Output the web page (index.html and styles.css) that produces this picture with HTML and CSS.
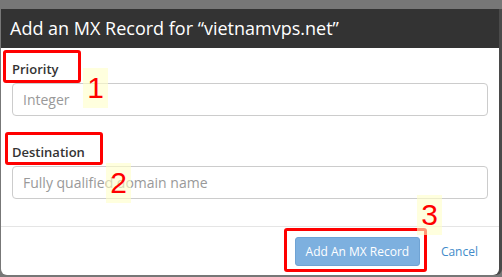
FILE: index.html
```html
<!DOCTYPE html>
<html lang="en">

<head>
  <meta charset="UTF-8">
  <title>Add an MX Record</title>
  <meta name="viewport" content="width=device-width, initial-scale=1">
  <link rel="stylesheet" href="styles.css">
</head>

<body>
  <div class="modal">
    <div class="modal-header">Add an MX Record for “vietnamvps.net”</div>
    <form class="modal-body">
      <div class="field">
        <label for="priority">Priority</label>
        <input type="text" id="priority" placeholder="Integer">
      </div>
      <div class="field">
        <label for="destination">Destination</label>
        <input type="text" id="destination" placeholder="Fully qualified domain name">
      </div>
    </form>
    <div class="modal-footer">
      <button type="button" class="btn-primary">Add An MX Record</button>
      <a href="#" class="cancel">Cancel</a>
    </div>
  </div>

  <!-- annotations drawn over the screenshot -->
  <div class="mark box-1"></div>
  <div class="mark box-2"></div>
  <div class="mark box-3"></div>
  <div class="step step-1">1</div>
  <div class="step step-2">2</div>
  <div class="step step-3">3</div>
</body>

</html>
```

FILE: styles.css
```css
body {
  font-family: "Open Sans", Arial, sans-serif;
  background: #777;
  margin: 0;
  height: 277px;
  overflow: hidden;
  position: relative;
}

.modal {
  width: 498px;
  margin: 9px 0 0 1px;
  background: #fff;
  border-radius: 0 0 6px 6px;
  box-shadow: 3px 0 0 #4a4a4a;
}

.modal-header {
  background: #333;
  color: #fff;
  height: 39px;
  line-height: 39px;
  padding: 0 9px;
  font-size: 18px;
}

.modal-body {
  padding: 11px 11px 27px 11px;
  margin: 0;
}

.field + .field {
  margin-top: 26px;
}

.field label {
  display: block;
  height: 20px;
  line-height: 20px;
  margin-bottom: 4px;
  font-size: 13px;
  font-weight: 600;
  color: #333;
}

.field input {
  display: block;
  box-sizing: border-box;
  width: 100%;
  height: 33px;
  padding: 0 10px;
  border: 1px solid #ccc;
  border-radius: 4px;
  font-family: inherit;
  font-size: 14px;
  color: #555;
}

.field input::placeholder {
  color: #999;
}

.modal-footer {
  border-top: 1px solid #e5e5e5;
  padding: 10px 21px 9px 0;
  display: flex;
  justify-content: flex-end;
  align-items: center;
  gap: 21px;
}

.btn-primary {
  width: 125px;
  height: 29px;
  border: 1px solid #6fa3d4;
  border-radius: 3px;
  background: #7db0df;
  color: #fff;
  font-family: inherit;
  font-size: 12px;
  padding: 0;
}

.cancel {
  color: #428bca;
  font-size: 12px;
  text-decoration: none;
}

.mark {
  position: absolute;
  box-sizing: border-box;
  border: 3px solid #f00;
  border-radius: 3px;
}

.box-1 {
  left: 3px;
  top: 50px;
  width: 78px;
  height: 33px;
}

.box-2 {
  left: 5px;
  top: 132px;
  width: 98px;
  height: 33px;
}

.box-3 {
  left: 284px;
  top: 228px;
  width: 143px;
  height: 44px;
}

.step {
  position: absolute;
  width: 25px;
  height: 40px;
  background: rgba(255, 255, 200, 0.6);
  color: #f00;
  font-family: "Liberation Sans", Arial, sans-serif;
  font-size: 30px;
  line-height: 40px;
  text-align: center;
}

.step-1 {
  left: 83px;
  top: 68px;
}

.step-2 {
  left: 106px;
  top: 163px;
}

.step-3 {
  left: 417px;
  top: 195px;
}
```
